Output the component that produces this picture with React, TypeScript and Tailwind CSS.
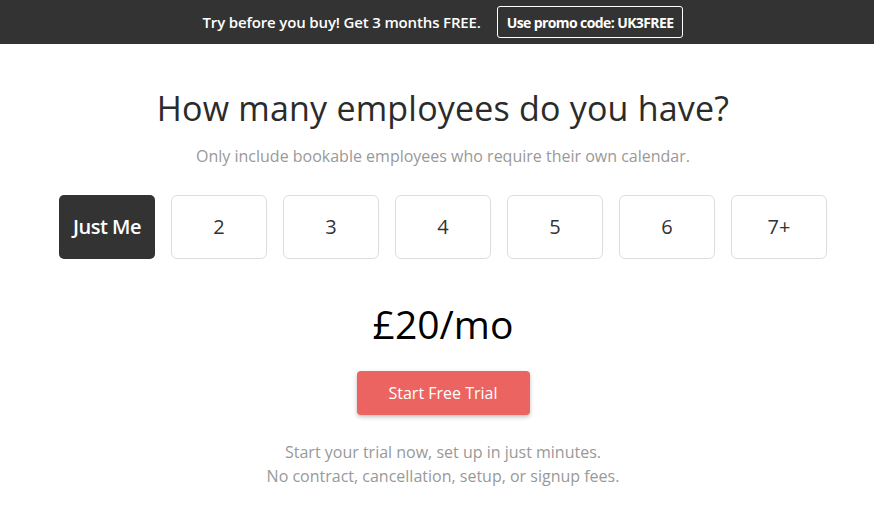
import { useState } from "react";

const options = ["Just Me", "2", "3", "4", "5", "6", "7+"];

export default function App() {
  const [selected, setSelected] = useState(0);

  return (
    <div className="min-h-screen bg-white font-['Open_Sans',sans-serif] text-[#333]">
      <div className="h-[44px] bg-[#333] flex items-center justify-center gap-4 pl-3">
        <span className="text-white text-[15px] font-semibold tracking-[-0.15px]">
          Try before you buy! Get 3 months FREE.
        </span>
        <button className="h-[32px] px-[9px] border border-white rounded-[3px] text-white text-[14px] font-bold tracking-[-0.6px]">
          Use promo code: UK3FREE
        </button>
      </div>

      <main className="flex flex-col items-center pl-3">
        <h1 className="mt-[44px] text-[34px] leading-[40px] text-[#2b2b2b] tracking-[0.2px]">
          How many employees do you have?
        </h1>
        <p className="mt-[17px] text-[16px] leading-[22px] text-[#999]">
          Only include bookable employees who require their own calendar.
        </p>

        <div className="mt-[28px] flex gap-4">
          {options.map((label, i) => (
            <button
              key={label}
              onClick={() => setSelected(i)}
              className={
                i === selected
                  ? "w-[96px] h-[64px] rounded-[5px] bg-[#333] text-white text-[20px] font-semibold tracking-[-0.5px]"
                  : "w-[96px] h-[64px] rounded-[6px] border border-[#ddd] bg-white text-[#333] text-[20px]"
              }
            >
              {label}
            </button>
          ))}
        </div>

        <div className="mt-[41px] text-[39px] leading-[48px] text-black">£20/mo</div>

        <button className="mt-[23px] w-[173px] h-[44px] rounded-[4px] bg-[#ec6461] text-white text-[16px] shadow-[0_2px_4px_rgba(0,0,0,0.25)]">
          Start Free Trial
        </button>

        <p className="mt-[25px] text-[16px] leading-[24px] text-[#999] text-center">
          Start your trial now, set up in just minutes.
          <br />
          No contract, cancellation, setup, or signup fees.
        </p>
      </main>
    </div>
  );
}
